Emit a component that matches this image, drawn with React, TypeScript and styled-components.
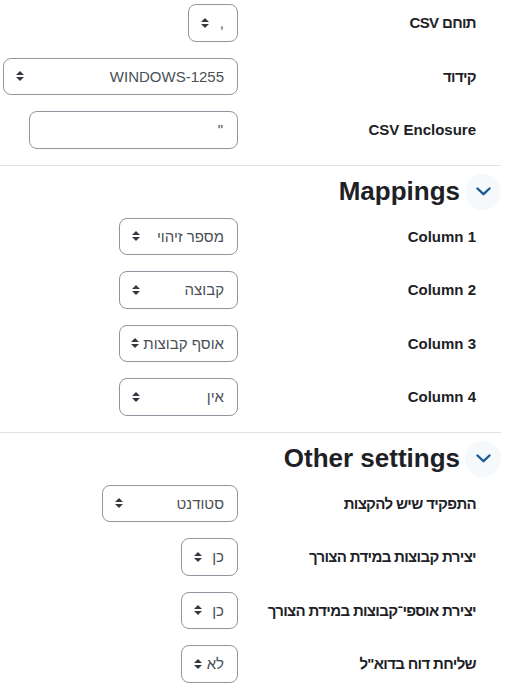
import React from "react";
import styled, { createGlobalStyle } from "styled-components";

const GlobalStyle = createGlobalStyle`
    body {
        margin: 0;
        background: #ffffff;
        font-family: "Liberation Sans", Arial, "DejaVu Sans", sans-serif;
        color: #1d2125;
    }
`;

const Page = styled.div`
    direction: rtl;
    width: 501px;
    padding-top: 4px;
`;

const Section = styled.section<{ $divider?: boolean }>`
    border-top: ${(p) => (p.$divider ? "1px solid #dee2e6" : "none")};
`;

const SectionHeader = styled.div`
    display: flex;
    align-items: center;
    gap: 5px;
    padding: 8px 0;
`;

const Toggle = styled.button`
    display: flex;
    align-items: center;
    justify-content: center;
    width: 36px;
    height: 36px;
    padding: 0;
    border: none;
    border-radius: 50%;
    background: #f5f9fc;
    color: #195a98;
`;

const Title = styled.h3`
    margin: 0;
    font-size: 26px;
    font-weight: 700;
    line-height: 1.2;
    color: #1d2125;
`;

const Row = styled.div`
    display: grid;
    grid-template-columns: 263px 1fr;
    align-items: center;
    min-height: 37.5px;
    margin-bottom: 16px;
`;

const Label = styled.label<{ $hebrew?: boolean }>`
    padding-right: 25px;
    font-size: 15px;
    font-weight: 700;
    letter-spacing: ${(p) => (p.$hebrew ? "-0.65px" : "normal")};
    color: #1d2125;
    white-space: nowrap;
`;

const Control = styled.div`
    display: flex;
`;

const Select = styled.div<{ $width: number }>`
    display: flex;
    align-items: center;
    gap: 4px;
    box-sizing: border-box;
    width: ${(p) => p.$width}px;
    height: 37.5px;
    padding: 0 13px 0 12px;
    border: 1px solid #8f959e;
    border-radius: 8px;
    background: #ffffff;
    font-size: 15px;
    color: #495057;
    white-space: nowrap;
    overflow: hidden;
`;

const Arrow = styled.svg`
    flex: none;
    margin-right: auto;
`;

const TextInput = styled.input`
    box-sizing: border-box;
    width: 209px;
    height: 37.5px;
    padding: 0 14px;
    border: 1px solid #8f959e;
    border-radius: 8px;
    font-family: inherit;
    font-size: 15px;
    color: #495057;
    direction: rtl;
    outline: none;
`;

function SelectArrow() {
    return (
        <Arrow width="8" height="10" viewBox="0 0 4 5">
            <path fill="#343a40" d="M2 0L0 2h4zm0 5L0 3h4z" />
        </Arrow>
    );
}

function Chevron() {
    return (
        <svg width="15" height="9" viewBox="0 0 15 9">
            <polyline
                points="1.5,1.5 7.5,7.2 13.5,1.5"
                fill="none"
                stroke="currentColor"
                strokeWidth="2.4"
                strokeLinecap="round"
                strokeLinejoin="round"
            />
        </svg>
    );
}

const isHebrew = (s: string) => /[\u0590-\u05ff]/.test(s);

interface SelectRowProps {
    label: string;
    value: string;
    width: number;
}

function SelectRow({ label, value, width }: SelectRowProps) {
    return (
        <Row>
            <Label $hebrew={isHebrew(label)}>{label}</Label>
            <Control>
                <Select $width={width}>
                    <span>{value}</span>
                    <SelectArrow />
                </Select>
            </Control>
        </Row>
    );
}

const mappings = ["מספר זיהוי", "קבוצה", "אוסף קבוצות", "אין"];

export default function App() {
    return (
        <>
            <GlobalStyle />
            <Page>
                <Section>
                    <SelectRow label="תוחם CSV" value="," width={50} />
                    <SelectRow label="קידוד" value="WINDOWS-1255" width={235} />
                    <Row>
                        <Label>CSV Enclosure</Label>
                        <Control>
                            <TextInput readOnly value={'"'} />
                        </Control>
                    </Row>
                </Section>

                <Section $divider>
                    <SectionHeader>
                        <Toggle aria-label="toggle">
                            <Chevron />
                        </Toggle>
                        <Title>Mappings</Title>
                    </SectionHeader>
                    {mappings.map((m, i) => (
                        <SelectRow key={m} label={`Column ${i + 1}`} value={m} width={119} />
                    ))}
                </Section>

                <Section $divider>
                    <SectionHeader>
                        <Toggle aria-label="toggle">
                            <Chevron />
                        </Toggle>
                        <Title>Other settings</Title>
                    </SectionHeader>
                    <SelectRow label="התפקיד שיש להקצות" value="סטודנט" width={136} />
                    <SelectRow label="יצירת קבוצות במידת הצורך" value="כן" width={57} />
                    <SelectRow label="יצירת אוספי־קבוצות במידת הצורך" value="כן" width={57} />
                    <SelectRow label='שליחת דוח בדוא"ל' value="לא" width={57} />
                </Section>
            </Page>
        </>
    );
}
